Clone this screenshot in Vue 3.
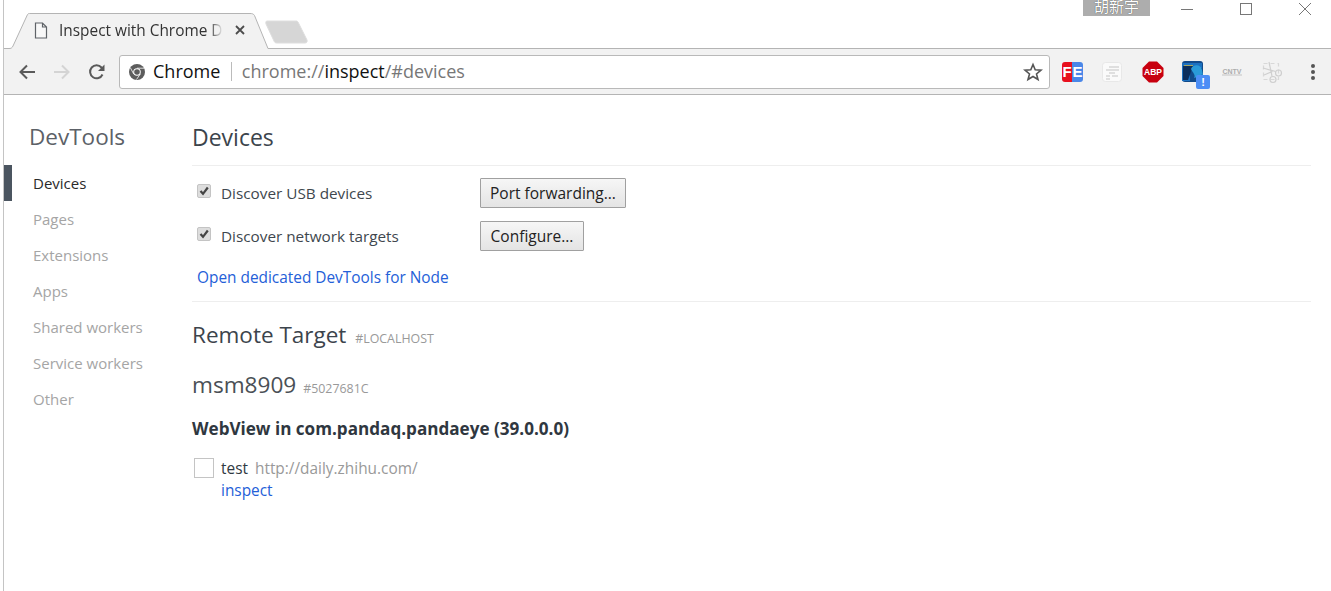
<template>
  <div class="window">
    <div class="titlebar">
      <div class="tabs">
        <svg class="tab-shape" width="258" height="37" viewBox="0 0 258 37">
          <path d="M0 35.500H6C8 35.500 9 35 10 33L24.500 1.500C25 .8 25.500 .5 26.500 .5H247C249 .5 250.500 .8 251.500 2.500L265 35.500V37H0Z" fill="#f2f2f2" transform="translate(-4 0)" />
          <path d="M0 35.500H6C8 35.500 9 35 10 33L24.500 1.500C25 .8 25.500 .5 26.500 .5H247C249 .5 250.500 .8 251.500 2.500L265 35.500" fill="none" stroke="#b4b4b4" transform="translate(-4 0)" />
        </svg>
        <div class="tab">
          <svg class="page-icon" width="14" height="17" viewBox="0 0 14 17">
            <path d="M1.500 1H8.500L12.500 5V16H1.500Z M8.500 1V5H12.500" fill="#f8f8f8" stroke="#5f6368" stroke-width="1.200" />
          </svg>
          <span class="tab-title">Inspect with Chrome D</span>
          <svg class="tab-close" width="10" height="10" viewBox="0 0 10 10">
            <path d="M1 1L9 9M9 1L1 9" stroke="#4c4c4c" stroke-width="1.800" />
          </svg>
        </div>
        <svg class="new-tab" width="44" height="24" viewBox="0 0 44 24">
          <path d="M3 1H32C33 1 34 1.500 34.500 3L43 20C43.500 21.500 43 23 41 23H13C11 23 10.500 22 10 21L2 4C1.500 2 2 1 3 1Z" fill="#d6d6d6" stroke="#dedede" />
        </svg>
      </div>
      <div class="caption">
        <span class="user-name">胡新宇</span>
        <svg class="cap-btn" width="16" height="16" viewBox="0 0 16 16"><path d="M2 8.500H14" stroke="#777" /></svg>
        <svg class="cap-btn" width="16" height="16" viewBox="0 0 16 16"><rect x="2.500" y="2.500" width="11" height="11" fill="none" stroke="#777" /></svg>
        <svg class="cap-btn" width="16" height="16" viewBox="0 0 16 16"><path d="M2 2L14 14M14 2L2 14" stroke="#777" /></svg>
      </div>
    </div>

    <div class="toolbar">
      <svg class="nav-icon" width="20" height="20" viewBox="0 0 20 20">
        <path d="M18 10H4M10 3.500L3.500 10L10 16.500" fill="none" stroke="#5a5a5a" stroke-width="2" />
      </svg>
      <svg class="nav-icon" width="20" height="20" viewBox="0 0 20 20">
        <path d="M2 10H16M10 3.500L16.500 10L10 16.500" fill="none" stroke="#d4d4d4" stroke-width="2" />
      </svg>
      <svg class="nav-icon" width="20" height="20" viewBox="0 0 20 20">
        <path d="M15.500 12.500A6.500 6.500 0 1 1 14.500 5.500L16 7" fill="none" stroke="#5a5a5a" stroke-width="2" />
        <path d="M17.500 2.500V9H11Z" fill="#5a5a5a" />
      </svg>
      <div class="omnibox">
        <svg class="chrome-icon" width="16" height="16" viewBox="0 0 16 16">
          <circle cx="8" cy="8" r="8" fill="#5c5c5c" />
          <circle cx="8" cy="8" r="3.800" fill="#fff" />
          <circle cx="8" cy="8" r="2.800" fill="#5c5c5c" />
          <path d="M8 4.200H15M4.700 10L1.500 4M11.300 10L7.500 15.500" stroke="#fff" stroke-width=".8" />
        </svg>
        <span class="chip">Chrome</span>
        <span class="divider"></span>
        <span class="url">chrome://<b>inspect</b>/#devices</span>
        <svg class="star" width="20" height="20" viewBox="0 0 20 20">
          <path d="M10 2.500L12.200 7.800L18 8.200L13.500 12L15 17.500L10 14.500L5 17.500L6.500 12L2 8.200L7.800 7.800Z" fill="none" stroke="#555" stroke-width="1.600" />
        </svg>
      </div>
      <div class="extensions">
        <div class="ext ext-fe"><span class="fe-f">F</span><span class="fe-e">E</span></div>
        <svg class="ext ext-note" width="22" height="22" viewBox="0 0 22 22">
          <rect x="1.500" y="1.500" width="19" height="19" rx="3" fill="#fafafa" stroke="#e8e8e8" />
          <path d="M8 6H18M5 9H18M8 12H14M5 15H9M11 15H17M5 18H9" stroke="#d6d6d6" stroke-width="1.400" />
        </svg>
        <svg class="ext ext-abp" width="22" height="22" viewBox="0 0 22 22">
          <path d="M7 .5H15L21.500 7V15L15 21.500H7L.5 15V7Z" fill="#c8000f" />
          <text x="11" y="14.300" text-anchor="middle" class="abp">ABP</text>
        </svg>
        <div class="ext ext-blue">
          <svg width="22" height="22" viewBox="0 0 22 22">
            <rect x="0" y="0" width="21" height="21" rx="3" fill="#124a8a" />
            <path d="M0 2H20V7H8V20H0Z" fill="#1c70bf" />
            <path d="M1 5H11L6 19H1Z" fill="#0c2f5c" />
            <path d="M9 8C11 3 19 3 20 9L21 14C18 13 17 16 12 17C14 14 11 12 9 8Z" fill="#2a9ad8" />
            <path d="M2 4.500H11" stroke="#c9b24a" stroke-width=".8" />
          </svg>
          <span class="badge">!</span>
        </div>
        <svg class="ext ext-cntv" width="26" height="14" viewBox="0 0 26 14">
          <text x="13" y="8.500" text-anchor="middle" class="cntv">CNTV</text>
          <path d="M3 10H23" fill="none" stroke="#c4c4c4" />
        </svg>
        <svg class="ext ext-cut" width="22" height="24" viewBox="0 0 22 24">
          <g fill="none" stroke="#d8d8d8" stroke-width="1.200">
            <rect x="2.500" y="3.500" width="15" height="16" stroke-dasharray="4 3" />
            <path d="M14.500 11.500L2 8M11 16L8 2M11.500 11.500L3 15" stroke="#cfcfcf" />
            <circle cx="17.500" cy="13" r="3" stroke="#cfcfcf" />
            <circle cx="12" cy="19.500" r="3" stroke="#cfcfcf" />
          </g>
        </svg>
      </div>
      <div class="menu-dots"><i></i><i></i><i></i></div>
    </div>

    <div class="page">
      <nav class="sidebar">
        <h1 class="brand">DevTools</h1>
        <a
          v-for="item in navItems"
          :key="item"
          class="nav-item"
          :class="{ selected: item === 'Devices' }"
        >{{ item }}</a>
      </nav>

      <main class="content">
        <h2 class="section-title">Devices</h2>
        <div class="options">
          <div class="option">
            <label class="check-label">
              <span class="checkbox"><svg width="10" height="10" viewBox="0 0 10 10"><path d="M1.500 5L4 7.800L8.800 1.500" fill="none" stroke="#444" stroke-width="2.200" /></svg></span>
              Discover USB devices
            </label>
            <button class="btn">Port forwarding...</button>
          </div>
          <div class="option option-second">
            <label class="check-label">
              <span class="checkbox"><svg width="10" height="10" viewBox="0 0 10 10"><path d="M1.500 5L4 7.800L8.800 1.500" fill="none" stroke="#444" stroke-width="2.200" /></svg></span>
              Discover network targets
            </label>
            <button class="btn btn-short">Configure...</button>
          </div>
          <a class="link node-link">Open dedicated DevTools for Node</a>
        </div>

        <div class="remote">
          <h2 class="remote-title">Remote Target <small>#LOCALHOST</small></h2>
          <h3 class="device-title">msm8909 <small>#5027681C</small></h3>
          <div class="browser-name">WebView in com.pandaq.pandaeye (39.0.0.0)</div>
          <div class="target">
            <span class="thumb"></span>
            <div>
              <div><span class="target-name">test</span><span class="target-url">http://daily.zhihu.com/</span></div>
              <a class="link">inspect</a>
            </div>
          </div>
        </div>
      </main>
    </div>
  </div>
</template>

<script setup>
const navItems = ['Devices', 'Pages', 'Extensions', 'Apps', 'Shared workers', 'Service workers', 'Other']
</script>

<style>
html, body {
  margin: 0;
  background: #fff;
  overflow: hidden;
}
</style>

<style scoped>
.window {
  width: 1328px;
  height: 591px;
  margin-left: 3px;
  overflow: hidden;
  font-family: "Open Sans", "Noto Sans", sans-serif;
  color: #303942;
  border-left: 1px solid #c4c4c4;
  box-sizing: border-box;
}

.titlebar {
  height: 48px;
  display: flex;
  justify-content: space-between;
  border-bottom: 1px solid #b4b4b4;
  position: relative;
}

.tabs {
  position: relative;
  flex: 1;
}

.tab-shape {
  position: absolute;
  left: 3px;
  top: 13px;
  overflow: visible;
}

.tab {
  position: absolute;
  left: 30px;
  top: 20px;
  display: flex;
  align-items: center;
  height: 20px;
}

.tab-title {
  margin-left: 11px;
  width: 164px;
  overflow: hidden;
  white-space: nowrap;
  font-size: 15.400px;
  color: #333;
  -webkit-mask-image: linear-gradient(to right, #000 150px, transparent 164px);
  mask-image: linear-gradient(to right, #000 150px, transparent 164px);
}

.tab-close {
  margin-left: 12px;
}

.new-tab {
  position: absolute;
  left: 260px;
  top: 20px;
}

.caption {
  display: flex;
  align-items: flex-start;
  height: 16px;
}

.user-name {
  width: 67px;
  height: 16px;
  background: #adadad;
  color: #fff;
  font: 15px/12px "Noto Sans CJK SC", sans-serif;
  text-shadow: 0 0 1px #333;
  text-align: center;
  overflow: hidden;
  margin-right: 29px;
}

.cap-btn {
  margin-top: 1px;
}

.cap-btn + .cap-btn {
  margin-left: 43px;
}

.cap-btn:last-child {
  margin-right: 18px;
}

.toolbar {
  height: 45px;
  background: #f2f2f2;
  border-bottom: 1px solid #b4b4b4;
  display: flex;
  align-items: center;
  padding-left: 13px;
}

.nav-icon {
  margin-right: 15px;
  flex: none;
}

.omnibox {
  width: 931px;
  height: 34px;
  margin-left: -3px;
  box-sizing: border-box;
  background: #fff;
  border: 1px solid #b9b9b9;
  border-radius: 3px;
  display: flex;
  align-items: center;
  padding-left: 9px;
  flex: none;
}

.chip {
  margin: -2px 0 0 8px;
  font-size: 18px;
  color: #111;
}

.divider {
  width: 1px;
  height: 19px;
  background: #bbb;
  margin: 0 9.500px 0 11px;
}

.url {
  margin-top: -2px;
  font-size: 18px;
  color: #777;
  flex: 1;
  white-space: nowrap;
}

.url b {
  font-weight: 400;
  color: #111;
}

.star {
  margin-right: 6px;
}

.extensions {
  display: flex;
  align-items: center;
  margin-left: 12px;
}

.ext {
  flex: none;
  display: block;
}

.ext-note {
  margin-left: 18px;
}

.ext-abp {
  margin-left: 19px;
}

.ext-blue {
  margin-left: 18px;
}

.ext-cntv {
  margin-left: 15px;
}

.ext-cut {
  margin-left: 16px;
}

.ext-fe {
  width: 21px;
  height: 20px;
  display: flex;
  border-radius: 3px;
  overflow: hidden;
  font: 700 15px/20px "Liberation Sans", sans-serif;
  color: #fff;
  text-align: center;
}

.fe-f {
  width: 10px;
  background: #e8101e;
}

.fe-e {
  width: 11px;
  background: #4a87e8;
}

.abp {
  font: 700 8.500px "Liberation Sans", sans-serif;
  fill: #fff;
}

.cntv {
  font: 700 7px "Liberation Sans", sans-serif;
  fill: #adadad;
}

.ext-blue {
  position: relative;
  width: 22px;
  height: 22px;
}

.ext-blue svg {
  display: block;
}

.badge {
  position: absolute;
  left: 14px;
  top: 14px;
  width: 14px;
  height: 14px;
  border-radius: 2px;
  background: #4d8ef5;
  color: #fff;
  font: 700 11px/14px "Liberation Sans", sans-serif;
  text-align: center;
}

.menu-dots {
  display: flex;
  flex-direction: column;
  gap: 2px;
  margin-left: 28px;
}

.menu-dots i {
  display: block;
  width: 4px;
  height: 4px;
  border-radius: 50%;
  background: #555;
}

.page {
  display: flex;
}

.sidebar {
  width: 188px;
  flex: none;
  padding-top: 24px;
}

.brand {
  margin: 0 0 10px 25px;
  font-size: 22.500px;
  font-weight: 400;
  line-height: 36px;
  color: #5c6167;
}

.nav-item {
  display: block;
  height: 36px;
  line-height: 36px;
  padding-left: 29px;
  font-size: 15px;
  color: #a5a5a5;
}

.nav-item.selected {
  color: #2a2a2a;
  border-left: 8px solid #4b5560;
  padding-left: 21px;
  box-sizing: border-box;
}

.content {
  width: 1119px;
  flex: none;
}

.section-title {
  margin: 0;
  padding: 24px 0 9px;
  height: 37px;
  line-height: 37px;
  font-size: 23px;
  font-weight: 400;
  color: #3c444c;
  border-bottom: 1px solid #eee;
}

.options {
  padding: 12px 0 10px;
  font-size: 15.300px;
  border-bottom: 1px solid #eee;
  height: 113px;
}

.option {
  display: flex;
  align-items: center;
  height: 30px;
}

.option-second {
  margin-top: 13px;
}

.check-label {
  width: 288px;
  display: flex;
  align-items: center;
  gap: 10px;
  padding-left: 5px;
  box-sizing: border-box;
  color: #40474e;
}

.checkbox {
  width: 14px;
  height: 14px;
  margin-top: -4px;
  box-sizing: border-box;
  background: #ddd;
  border: 1px solid #c4c4c4;
  border-radius: 2px;
  display: flex;
  align-items: center;
  justify-content: center;
}

.btn {
  width: 146px;
  height: 30px;
  padding: 0;
  background: linear-gradient(#f6f6f6, #e4e4e4);
  border: 1px solid #a0a0a0;
  border-radius: 1px;
  font: 15.500px "Open Sans", sans-serif;
  color: #222;
}

.btn-short {
  width: 104px;
}

.link {
  color: #2460d8;
  display: block;
  font-size: 15.400px;
}

.node-link {
  margin: 17px 0 0 5px;
  line-height: 20px;
}

.remote-title {
  margin: 17px 0 0;
  font-size: 22.500px;
  font-weight: 400;
  line-height: 32px;
  color: #3c444c;
}

.remote-title small,
.device-title small {
  font-size: 12.400px;
  color: #999;
  margin-left: 3px;
}

.device-title {
  margin: 14px 0 0;
  font-size: 22.600px;
  font-weight: 400;
  line-height: 32px;
  color: #4a5056;
}

.device-title small {
  margin-left: 1px;
}

.browser-name {
  margin-top: 12px;
  font-size: 17.100px;
  font-weight: 700;
  line-height: 24px;
  color: #2f3740;
}

.target {
  display: flex;
  margin: 17px 0 0 2px;
  font-size: 15.400px;
  line-height: 22px;
}

.thumb {
  width: 20px;
  height: 20px;
  box-sizing: border-box;
  border: 1px solid #c4c4c4;
  margin-right: 7px;
}

.target-name {
  color: #303942;
  margin-right: 7px;
}

.target-url {
  color: #999;
}
</style>
